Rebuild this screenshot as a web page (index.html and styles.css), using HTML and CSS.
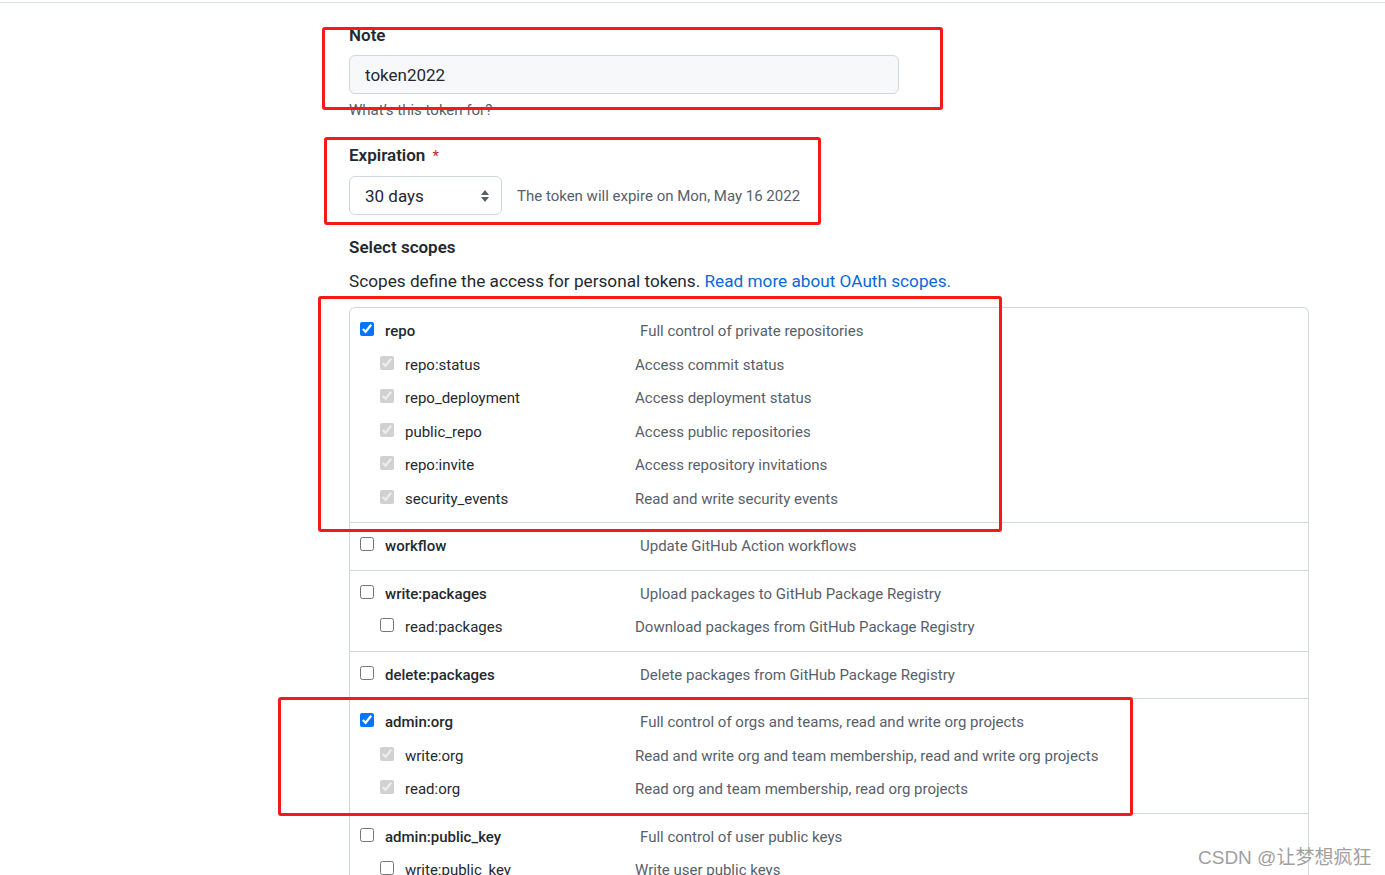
FILE: index.html
```html
<!DOCTYPE html>
<html lang="en">
<head>
<meta charset="utf-8">
<title>New personal access token</title>
<link rel="stylesheet" href="styles.css">
</head>
<body>
<div class="topbar"></div>
<main class="form">
  <div class="field">
    <label class="field-label" for="note">Note</label>
    <input id="note" class="text-input" type="text" value="token2022">
    <p class="hint">What’s this token for?</p>
  </div>

  <div class="field field-exp">
    <label class="field-label" for="exp">Expiration <span class="req">*</span></label>
    <div class="exp-row">
      <div class="select" id="exp">
        <span>30 days</span>
        <svg class="select-arrow" width="10" height="16" viewBox="0 0 10 16"><path d="M5 2 L9 7 H1 Z M5 14 L9 9 H1 Z" fill="#57606a"/></svg>
      </div>
      <span class="exp-note">The token will expire on Mon, May 16 2022</span>
    </div>
  </div>

  <h3 class="field-label scopes-title">Select scopes</h3>
  <p class="scopes-desc">Scopes define the access for personal tokens. <a href="#">Read more about OAuth scopes.</a></p>

  <div class="scopes">
    <div class="group">
      <div class="row top"><input type="checkbox" checked><span class="name">repo</span><span class="desc">Full control of private repositories</span></div>
      <div class="row sub"><input type="checkbox" checked disabled><span class="name">repo:status</span><span class="desc">Access commit status</span></div>
      <div class="row sub"><input type="checkbox" checked disabled><span class="name">repo_deployment</span><span class="desc">Access deployment status</span></div>
      <div class="row sub"><input type="checkbox" checked disabled><span class="name">public_repo</span><span class="desc">Access public repositories</span></div>
      <div class="row sub"><input type="checkbox" checked disabled><span class="name">repo:invite</span><span class="desc">Access repository invitations</span></div>
      <div class="row sub"><input type="checkbox" checked disabled><span class="name">security_events</span><span class="desc">Read and write security events</span></div>
    </div>
    <div class="group">
      <div class="row top"><input type="checkbox"><span class="name">workflow</span><span class="desc">Update GitHub Action workflows</span></div>
    </div>
    <div class="group">
      <div class="row top"><input type="checkbox"><span class="name">write:packages</span><span class="desc">Upload packages to GitHub Package Registry</span></div>
      <div class="row sub"><input type="checkbox"><span class="name">read:packages</span><span class="desc">Download packages from GitHub Package Registry</span></div>
    </div>
    <div class="group">
      <div class="row top"><input type="checkbox"><span class="name">delete:packages</span><span class="desc">Delete packages from GitHub Package Registry</span></div>
    </div>
    <div class="group">
      <div class="row top"><input type="checkbox" checked><span class="name">admin:org</span><span class="desc">Full control of orgs and teams, read and write org projects</span></div>
      <div class="row sub"><input type="checkbox" checked disabled><span class="name">write:org</span><span class="desc">Read and write org and team membership, read and write org projects</span></div>
      <div class="row sub"><input type="checkbox" checked disabled><span class="name">read:org</span><span class="desc">Read org and team membership, read org projects</span></div>
    </div>
    <div class="group">
      <div class="row top"><input type="checkbox"><span class="name">admin:public_key</span><span class="desc">Full control of user public keys</span></div>
      <div class="row sub"><input type="checkbox"><span class="name">write:public_key</span><span class="desc">Write user public keys</span></div>
      <div class="row sub"><input type="checkbox"><span class="name">read:public_key</span><span class="desc">Read user public keys</span></div>
    </div>
  </div>
</main>

<div class="mark mark-note"></div>
<div class="mark mark-exp"></div>
<div class="mark mark-repo"></div>
<div class="mark mark-org"></div>

<div class="watermark">CSDN @让梦想疯狂</div>
</body>
</html>
```

FILE: styles.css
```css
* { box-sizing: border-box; }
html, body { margin: 0; padding: 0; }
body {
  width: 1385px;
  height: 875px;
  overflow: hidden;
  background: #fff;
  color: #24292f;
  font-family: Roboto, "Liberation Sans", "Noto Sans CJK SC", sans-serif;
  position: relative;
}
.topbar {
  height: 3px;
  border-bottom: 1px solid #d8dee4;
}
.form {
  padding-left: 349px;
  width: 1309px;
}
.field { display: flex; flex-direction: column; align-items: flex-start; }
.field:first-child { margin-top: 22px; }
.field-label {
  display: block;
  margin: 0;
  font-size: 17px;
  line-height: 20px;
  font-weight: 600;
}
.req { color: #cf222e; font-weight: 400; font-size: 15px; margin-left: 3px; }
.text-input {
  margin-top: 10px;
  width: 550px;
  height: 39px;
  padding: 0 15px;
  font: 17px Roboto, sans-serif;
  color: #24292f;
  background: #f6f8fa;
  border: 1px solid #d0d7de;
  border-radius: 6px;
  outline: none;
}
.hint {
  margin: 6px 0 0;
  font-size: 15px;
  line-height: 20px;
  color: #57606a;
}
.field-exp { margin-top: 25px; }
.exp-row {
  margin-top: 10px;
  display: flex;
  align-items: center;
  gap: 15px;
}
.select {
  width: 153px;
  height: 39px;
  padding: 0 11px 0 15px;
  display: flex;
  align-items: center;
  justify-content: space-between;
  border: 1px solid #d0d7de;
  border-radius: 6px;
  background: #fff;
  font-size: 17px;
}
.exp-note { font-size: 15px; color: #57606a; }
.scopes-title { margin-top: 22px; }
.scopes-desc {
  margin: 12px 0 0;
  font-size: 17.2px;
  line-height: 24px;
}
.scopes-desc a { color: #0969da; text-decoration: none; }
.scopes {
  margin-top: 14px;
  width: 960px;
  border: 1px solid #d0d7de;
  border-bottom: 0;
  border-radius: 6px 6px 0 0;
}
.group { padding: 6.5px 0; }
.group + .group { border-top: 1px solid #d0d7de; }
.row {
  height: 33.5px;
  display: flex;
  align-items: center;
  font-size: 15px;
}
.row input {
  margin: 0 0 4px;
  width: 14px;
  height: 14px;
  flex: none;
}
.row.top { padding-left: 10px; }
.row.sub { padding-left: 30px; }
.row .name { flex: none; }
.row.top .name { width: 255px; margin-left: 11px; font-weight: 500; }
.row.sub .name { width: 230px; margin-left: 11px; }
.desc { color: #57606a; }

.mark {
  position: absolute;
  border: 3px solid #f5191a;
  border-radius: 3px;
  pointer-events: none;
}
.mark-note { left: 322px; top: 27px; width: 621px; height: 83px; }
.mark-exp { left: 324px; top: 137px; width: 497px; height: 88px; }
.mark-repo { left: 318px; top: 296px; width: 684px; height: 236px; }
.mark-org { left: 278px; top: 697px; width: 855px; height: 119px; }

.watermark {
  position: absolute;
  left: 1198px;
  top: 842px;
  font-family: "Liberation Sans", "Noto Sans CJK SC", sans-serif;
  font-size: 19px;
  color: #a0a0a0;
  text-shadow: 0 0 2px #fff;
}
```
